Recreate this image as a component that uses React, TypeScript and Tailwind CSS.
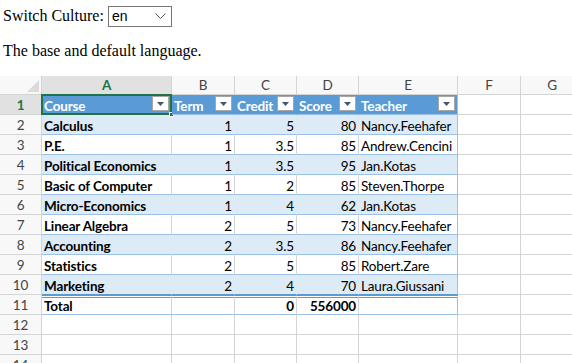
type Row = [string, string, string, string, string];

const COLS = ["A", "B", "C", "D", "E", "F", "G"];
const WIDTHS = ["w-[130px]", "w-[63px]", "w-[62px]", "w-[62px]", "w-[99px]", "w-[63px]", "w-[63px]"];
const HEADERS = ["Course", "Term", "Credit", "Score", "Teacher"];

const DATA: Row[] = [
  ["Calculus", "1", "5", "80", "Nancy.Feehafer"],
  ["P.E.", "1", "3.5", "85", "Andrew.Cencini"],
  ["Political Economics", "1", "3.5", "95", "Jan.Kotas"],
  ["Basic of Computer", "1", "2", "85", "Steven.Thorpe"],
  ["Micro-Economics", "1", "4", "62", "Jan.Kotas"],
  ["Linear Algebra", "2", "5", "73", "Nancy.Feehafer"],
  ["Accounting", "2", "3.5", "86", "Nancy.Feehafer"],
  ["Statistics", "2", "5", "85", "Robert.Zare"],
  ["Marketing", "2", "4", "70", "Laura.Giussani"],
];

function FilterButton() {
  return (
    <span className="ml-auto mr-[2px] mb-[1px] flex h-[15px] w-[17px] shrink-0 items-center justify-center self-center border border-[#a6a6a6] bg-white">
      <svg width="7" height="4" viewBox="0 0 7 4">
        <path d="M0 0 H7 L3.5 4 Z" fill="#44546a" />
      </svg>
    </span>
  );
}

function RowHead({ n, active }: { n: number; active?: boolean }) {
  return (
    <div
      className={`flex w-[42px] shrink-0 items-end justify-center border-r border-b border-[#d4d4d4] pb-[2px] ${
        active ? "bg-[#e1e1e1] font-bold text-[#217346]" : "bg-[#f8f8f8] text-[#444]"
      }`}
    >
      {n}
    </div>
  );
}

function EmptyCells({ from }: { from: number }) {
  return (
    <>
      {WIDTHS.slice(from).map((w, i) => (
        <div key={i} className={`${w} shrink-0 border-r border-b border-[#d4d4d4]`} />
      ))}
    </>
  );
}

export default function App() {
  return (
    <div className="h-[363px] w-[572px] overflow-hidden bg-white">
      <div className="h-[76px] pl-[3px] pt-[5px] font-['Liberation_Serif',serif] text-[16px] text-black">
        <div className="flex h-[22px] items-center gap-[4px]">
          <span>Switch Culture:</span>
          <div className="flex h-[21px] w-[64px] items-center justify-between border border-[#767676] pl-[3px] pr-[5px] font-['Liberation_Sans',sans-serif] text-[14px]">
            <span>en</span>
            <svg width="11" height="7" viewBox="0 0 11 7">
              <path d="M0.5 0.5 L5.5 5.5 L10.5 0.5" fill="none" stroke="#555" strokeWidth="1" />
            </svg>
          </div>
        </div>
        <p className="mt-[14px] leading-[20px]">The base and default language.</p>
      </div>

      <div className="font-['Lato',sans-serif] text-[13.5px] leading-none tracking-[-0.15px] text-black">
        {/* column headers */}
        <div className="flex h-[19px]">
          <div className="relative w-[42px] shrink-0 border-r border-b border-[#d4d4d4] bg-[#f8f8f8]">
            <svg className="absolute right-[2px] bottom-[2px]" width="12" height="12" viewBox="0 0 12 12">
              <path d="M12 0 V12 H0 Z" fill="#dadada" />
            </svg>
          </div>
          {COLS.map((c, i) => (
            <div
              key={c}
              className={`${WIDTHS[i]} flex shrink-0 items-center justify-center border-r border-b pt-[1px] ${
                i === 0
                  ? "border-r-[#d4d4d4] border-b-[#217346] bg-[#e1e1e1] font-bold text-[#217346]"
                  : "border-[#d4d4d4] bg-[#f8f8f8] text-[#444]"
              }`}
            >
              {c}
            </div>
          ))}
        </div>

        {/* table header row */}
        <div className="flex h-[20px]">
          <RowHead n={1} active />
          {HEADERS.map((h, i) => (
            <div
              key={h}
              className={`${WIDTHS[i]} relative flex shrink-0 items-end border-b border-r border-b-[#9bc2e6] bg-[#5b9bd5] pb-[1px] pl-[2px] font-bold text-white ${
                i === 4 ? "border-r-[#9bc2e6]" : "border-r-[#5b9bd5]"
              }`}
            >
              <span>{h}</span>
              <FilterButton />
              {i === 0 && (
                <div className="absolute -top-[1px] -left-[1px] h-[21px] w-[131px] border-2 border-[#217346]">
                  <div className="absolute -right-[4px] -bottom-[4px] h-[5px] w-[5px] border border-white bg-[#217346]" />
                </div>
              )}
            </div>
          ))}
          <EmptyCells from={5} />
        </div>

        {/* data rows */}
        {DATA.map((r, ri) => {
          const band = ri % 2 === 0;
          return (
            <div key={ri} className="flex h-[20px]">
              <RowHead n={ri + 2} />
              {r.map((v, ci) => (
                <div
                  key={ci}
                  className={`${WIDTHS[ci]} flex shrink-0 items-end overflow-hidden whitespace-nowrap border-r border-b px-[2px] pb-[1px] ${
                    ri === DATA.length - 1 ? "border-b-[#5b9bd5]" : "border-b-[#9bc2e6]"
                  } ${
                    ci === 4 ? "border-r-[#9bc2e6]" : band ? "border-r-[#ddebf7]" : "border-r-[#d4d4d4]"
                  } ${band ? "bg-[#ddebf7]" : "bg-white"} ${ci === 0 ? "font-bold" : ""} ${
                    ci >= 1 && ci <= 3 ? "justify-end" : ""
                  }`}
                >
                  {v}
                </div>
              ))}
              <EmptyCells from={5} />
            </div>
          );
        })}

        {/* total row */}
        <div className="flex h-[20px]">
          <RowHead n={11} />
          {["Total", "", "0", "556000", ""].map((v, ci) => (
            <div
              key={ci}
              className={`${WIDTHS[ci]} flex shrink-0 items-end border-t-[3px] border-r border-b border-double border-t-[#5b9bd5] border-b-[#9bc2e6] px-[2px] pb-[1px] font-bold ${
                ci === 4 ? "border-r-[#9bc2e6]" : "border-r-[#d4d4d4]"
              } ${ci >= 1 && ci <= 3 ? "justify-end" : ""}`}
            >
              {v}
            </div>
          ))}
          <EmptyCells from={5} />
        </div>

        {[12, 13, 14].map((n) => (
          <div key={n} className="flex h-[20px]">
            <RowHead n={n} />
            <EmptyCells from={0} />
          </div>
        ))}
      </div>
    </div>
  );
}
